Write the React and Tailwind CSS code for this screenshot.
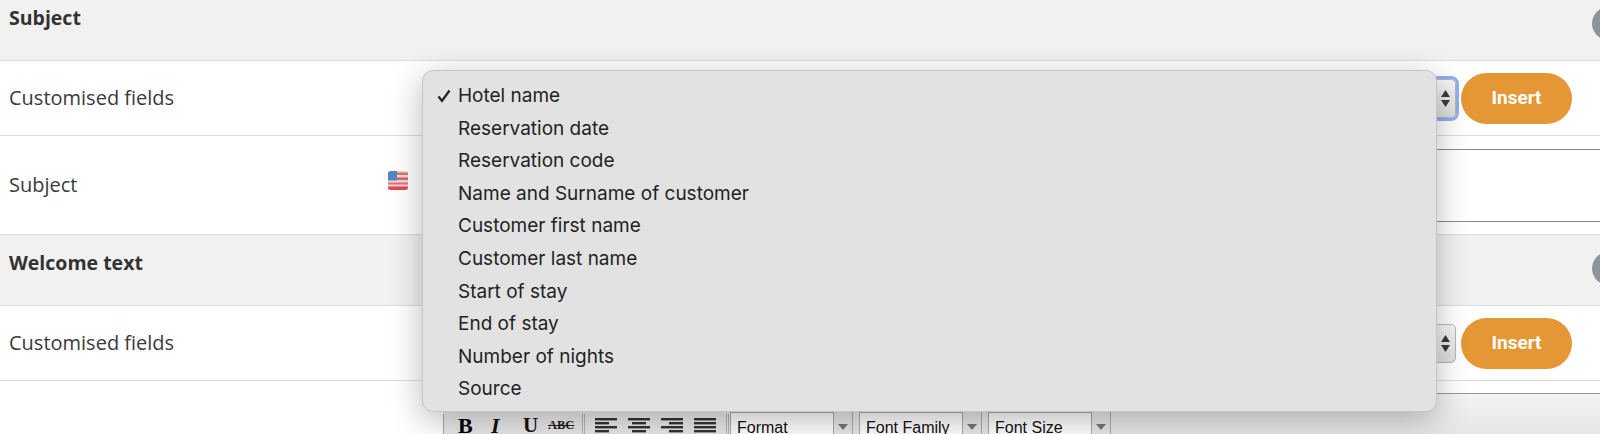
const FIELDS = [
  'Hotel name',
  'Reservation date',
  'Reservation code',
  'Name and Surname of customer',
  'Customer first name',
  'Customer last name',
  'Start of stay',
  'End of stay',
  'Number of nights',
  'Source',
];

const SectionHeader = ({ title }) => (
  <div className="flex h-[71px] items-start justify-between overflow-hidden border-b border-[#dcdce0] bg-[#f1f1f1] pl-[9px] pt-[14px]">
    <span className="text-[19.5px] font-bold leading-[28px] text-[#333]">{title}</span>
    <span className="-mr-[25px] mt-[3px] h-[33px] w-[33px] shrink-0 rounded-full bg-[#8f939b]" />
  </div>
);

const Arrows = () => (
  <svg width="9" height="17" viewBox="0 0 9 17" className="mr-[5px]">
    <path d="M4.5 0 L9 7 L0 7 Z" fill="#3a3a3a" />
    <path d="M4.5 17 L9 10 L0 10 Z" fill="#3a3a3a" />
  </svg>
);

const FieldsRow = ({ focused }) => (
  <div className="flex h-[75px] items-center border-b border-[#dcdcdc] bg-white">
    <span className="w-[443px] shrink-0 pb-[1px] pl-[9px] text-[20px] text-[#3a3a3a]">Customised fields</span>
    <div
      className={`flex h-[39px] flex-1 items-center justify-end rounded-[5px] border border-[#b5b5b5] bg-gradient-to-b from-[#f6f6f6] to-[#dedede] ${
        focused ? 'outline-[3.5px] outline-solid outline-[#8fb0f0]' : ''
      }`}
    >
      <Arrows />
    </div>
    <button className="ml-[5px] mr-[28px] h-[51px] w-[111px] rounded-full bg-[#e59735] font-['Roboto',sans-serif] text-[19px] font-bold text-white">
      Insert
    </button>
  </div>
);

const Flag = () => (
  <svg width="20" height="19" viewBox="0 0 20 19" className="mb-[9px] shrink-0">
    <rect width="20" height="19" rx="3" fill="#f3d6d6" />
    <rect x="9" y="1.5" width="11" height="2.5" fill="#c97c7c" />
    <rect x="9" y="6.5" width="11" height="2.5" fill="#c96a6a" />
    <rect y="11.5" width="20" height="2" fill="#e27070" />
    <path d="M0 15.5 H20 V16 a3 3 0 0 1 -3 3 H3 a3 3 0 0 1 -3 -3 Z" fill="#e04a4a" />
    <path d="M3 0 H9 V9.5 H0 V3 a3 3 0 0 1 3 -3 Z" fill="#5a86bd" />
  </svg>
);

const AlignIcon = ({ lines }) => (
  <svg width="22" height="20" viewBox="0 0 22 20" className="shrink-0">
    {lines.map(([x, w], i) => (
      <rect key={i} x={x} y={i * 4} width={w} height="2.4" fill="#333" />
    ))}
  </svg>
);

const ToolbarSelect = ({ label, left }) => (
  <div className={`flex h-[30px] shrink-0 ${left}`}>
    <div className="w-[104px] border border-b-0 border-[#aaa] bg-white pl-[6px] pt-[5px] font-['Liberation_Sans',sans-serif] text-[16px] leading-[20px] text-[#111]">
      {label}
    </div>
    <div className="flex w-[19px] justify-center border-r border-[#aaa] bg-[#e8e8e8] pt-[12px]">
      <svg width="10" height="6" viewBox="0 0 10 6">
        <path d="M0 0 H10 L5 6 Z" fill="#777" />
      </svg>
    </div>
  </div>
);

const Toolbar = () => (
  <div className="ml-[443px] flex h-[41px] items-start border-t border-[#9a9a9a] bg-gradient-to-b from-[#f3f3f3] to-[#e6e6e6] pt-[20px]">
    <div className="flex h-[23px] items-center border-l border-[#aaa]">
      <span className="ml-[14px] w-[33px] font-['Liberation_Serif',serif] text-[22px] font-bold text-black">B</span>
      <span className="w-[32px] font-['Liberation_Serif',serif] text-[22px] font-bold italic text-[#111]">I</span>
      <span className="w-[25px] font-['Liberation_Serif',serif] text-[21px] font-bold text-[#111] underline">U</span>
      <span className="w-[33px] font-['Liberation_Serif',serif] text-[12.5px] font-bold text-[#222] line-through">ABC</span>
      <span className="ml-[1px] mr-[8px] h-full w-[3px] border-x border-[#b5b5b5]" />
      <div className="flex gap-[11px] pl-[2px] pt-[4px]">
        <AlignIcon lines={[[0, 22], [0, 14], [0, 22], [0, 14], [0, 22]]} />
        <AlignIcon lines={[[0, 22], [4, 14], [0, 22], [4, 14], [0, 22]]} />
        <AlignIcon lines={[[0, 22], [8, 14], [0, 22], [8, 14], [0, 22]]} />
        <AlignIcon lines={[[0, 22], [0, 22], [0, 22], [0, 22], [0, 22]]} />
      </div>
      <span className="ml-[10px] h-full w-[3px] border-x border-[#b5b5b5]" />
    </div>
    <ToolbarSelect label="Format" left="ml-[1px] -mt-[2px]" />
    <ToolbarSelect label="Font Family" left="ml-[6px] -mt-[2px]" />
    <ToolbarSelect label="Font Size" left="ml-[6px] -mt-[2px]" />
  </div>
);

const FieldsMenu = () => (
  <div className="absolute left-[422px] top-[70px] h-[342px] w-[1015px] rounded-[11px] border border-[#c6c6c6] bg-[#e2e2e2] pt-[9px] font-['Inter',sans-serif] text-[19px] leading-[32.6px] text-[#222] shadow-[0_8px_32px_rgba(0,0,0,0.28)]">
    {FIELDS.map((field, index) => (
      <div key={field} className="relative pl-[35px]">
        {index === 0 && (
          <svg width="14" height="14" viewBox="0 0 14 14" className="absolute left-[14px] top-[9px]">
            <path d="M1.5 7.5 L5 12 L12.5 1.5" fill="none" stroke="#222" strokeWidth="2.2" />
          </svg>
        )}
        {field}
      </div>
    ))}
  </div>
);

export default function App() {
  return (
    <div className="relative h-[434px] overflow-hidden bg-white font-['Open_Sans',sans-serif]">
      <div className="-mt-[10px]">
        <SectionHeader title="Subject" />
        <FieldsRow focused />
        <div className="flex h-[99px] items-center border-b border-[#dcdcdc] bg-white">
          <span className="w-[388px] shrink-0 pb-[1px] pl-[9px] text-[20px] text-[#3a3a3a]">Subject</span>
          <Flag />
          <div className="ml-[35px] h-[73px] flex-1 border-y border-[#8a8a8a]" />
        </div>
        <SectionHeader title="Welcome text" />
        <FieldsRow />
        <div className="h-[12px] bg-white" />
        <Toolbar />
      </div>
      <FieldsMenu />
    </div>
  );
}
